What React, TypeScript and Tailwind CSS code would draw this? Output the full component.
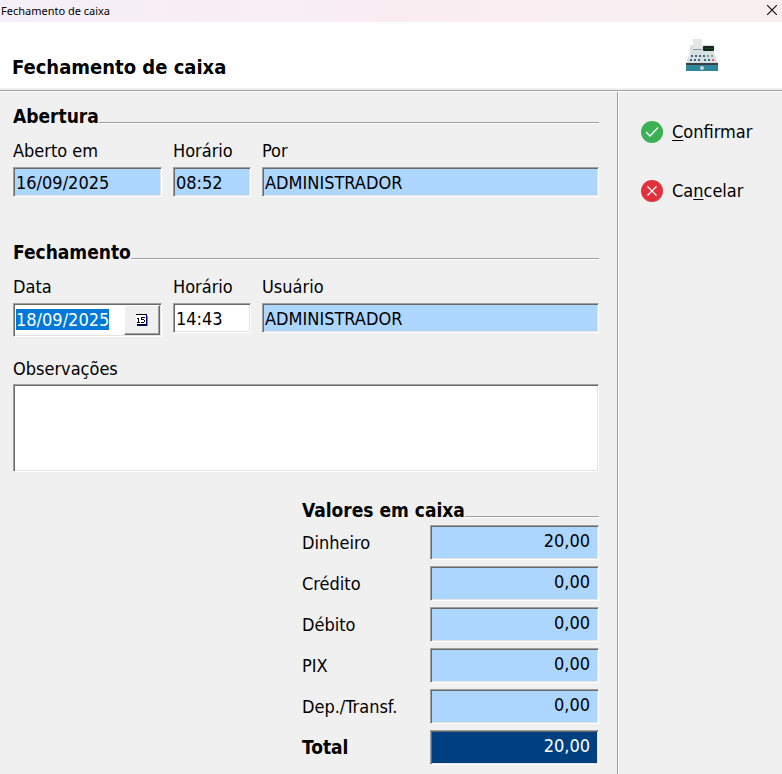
import { useEffect, useRef } from "react";
import type { ReactNode } from "react";

const bevel =
  "rounded-none border border-t-[#a0a0a0] border-l-[#a0a0a0] border-r-white border-b-white shadow-[inset_1px_1px_0_#696969,inset_-1px_-1px_0_#e3e3e3] outline-none";

const valores = [
  { id: "dinheiro", label: "Dinheiro", valor: "20,00" },
  { id: "credito", label: "Crédito", valor: "0,00" },
  { id: "debito", label: "Débito", valor: "0,00" },
  { id: "pix", label: "PIX", valor: "0,00" },
  { id: "transf", label: "Dep./Transf.", valor: "0,00" },
];

function CaixaIcon() {
  return (
    <svg width="32" height="32" viewBox="0 0 32 32" aria-hidden="true">
      <path d="M4 6h24v9H4z" fill="#d3e2e1" />
      <path d="M4 14h24l4 10H0z" fill="#d9dfe0" />
      <rect x="7" y="0" width="9" height="10" fill="#e6e6e6" />
      <rect x="7" y="10" width="9" height="1" fill="#8f9999" />
      <rect x="17" y="7" width="11" height="5" rx="1" fill="#14241a" />
      <path d="M19 9.5h8" stroke="#0b6416" strokeDasharray="2 1" />
      <path
        d="M5 16h2v2H5zM9 16h2v2H9zM13 16h2v2h-2zM17 16h2v2h-2zM4 20h2v2H4zM8 20h2v2H8zM12 20h2v2h-2zM18 20h2v2h-2z"
        fill="#356b80"
      />
      <path d="M21 16h2v2h-2zM25 16h2v2h-2z" fill="#969a8c" />
      <path d="M22 20h2v2h-2z" fill="#356b80" />
      <rect x="26" y="20" width="2" height="2" fill="#e8626b" />
      <rect y="24" width="32" height="2" fill="#3b3f44" />
      <rect y="26" width="32" height="6" fill="#2f8799" />
      <circle cx="16" cy="29" r="2" fill="#c5d5d8" />
    </svg>
  );
}

function Titulo({ children }: { children: ReactNode }) {
  return (
    <div className="flex items-end">
      <h2 className="text-[19px] leading-5 font-bold">{children}</h2>
      <div className="mb-0.5 h-0.5 flex-1 border-t border-b border-t-[#a0a0a0] border-b-white"></div>
    </div>
  );
}

function Campo({ id, label, valor, readOnly = true }: { id: string; label: string; valor: string; readOnly?: boolean }) {
  return (
    <div className="flex flex-col">
      <label htmlFor={id} className="mb-1 leading-6">
        {label}
      </label>
      <input
        id={id}
        defaultValue={valor}
        readOnly={readOnly}
        className={`h-[30px] w-full px-0.5 ${bevel} ${readOnly ? "bg-[#add6ff]" : "bg-white"}`}
      />
    </div>
  );
}

export default function App() {
  const dataRef = useRef<HTMLInputElement>(null);

  useEffect(() => {
    dataRef.current?.focus();
    dataRef.current?.select();
  }, []);

  return (
    <div className="flex min-h-screen flex-col bg-[#f0f0f0] font-['DejaVu_Sans_Condensed','DejaVu_Sans',sans-serif] text-lg text-black">
      <div className="flex h-[22px] items-center justify-between bg-gradient-to-r from-[#f5eff8] via-[#f9edf2] to-[#f9eff1] pl-px">
        <span className="font-['Noto_Sans',sans-serif] text-[11px] leading-5">Fechamento de caixa</span>
        <button type="button" aria-label="Fechar" className="px-[5px]">
          <svg width="10" height="10" viewBox="0 0 10 10" className="-mt-0.5" aria-hidden="true">
            <path d="M0 0l10 10M10 0L0 10" stroke="#111" strokeWidth="1.2" />
          </svg>
        </button>
      </div>

      <header className="flex h-[66px] items-end justify-between bg-white pr-16 pl-3">
        <h1 className="pb-[7px] text-xl leading-7 font-bold">Fechamento de caixa</h1>
        <div className="pb-[17px]">
          <CaixaIcon />
        </div>
      </header>
      <div className="mt-0.5 h-0.5 border-t border-b border-t-[#a0a0a0] border-b-white"></div>

      <div className="flex flex-1">
        <form className="flex-1 border-r border-[#a0a0a0] pt-3.5 pr-[18px] pb-2 pl-[13px]">
          <section>
            <Titulo>Abertura</Titulo>
            <div className="mt-[13px] grid grid-cols-[149px_78px_1fr] gap-x-[11px]">
              <Campo id="aberto" label="Aberto em" valor="16/09/2025" />
              <Campo id="hora-abertura" label="Horário" valor="08:52" />
              <Campo id="por" label="Por" valor="ADMINISTRADOR" />
            </div>
          </section>

          <section className="mt-[45px]">
            <Titulo>Fechamento</Titulo>
            <div className="mt-[13px] grid grid-cols-[149px_78px_1fr] gap-x-[11px]">
              <div className="flex flex-col">
                <label htmlFor="data" className="mb-1 leading-6">
                  Data
                </label>
                <div className={`flex h-[34px] bg-white p-px ${bevel}`}>
                  <input
                    id="data"
                    ref={dataRef}
                    defaultValue="18/09/2025"
                    className="h-7 min-w-0 flex-1 pl-px leading-6 outline-none selection:bg-[#0078d7] selection:text-white"
                  />
                  <button
                    type="button"
                    aria-label="Calendário"
                    className="flex w-9 items-center justify-center border border-t-white border-l-white border-r-[#696969] border-b-[#696969] bg-[#f0f0f0] shadow-[inset_-1px_-1px_0_#a0a0a0]"
                  >
                    <svg width="12" height="12" viewBox="0 0 12 12" shapeRendering="crispEdges" aria-hidden="true">
                      <rect x="0" y="1" width="10" height="9" fill="#fff" />
                      <path d="M0 .5h11M1 10.5h10" stroke="#000" />
                      <path d="M10.500 1v10M1 11.500h11" stroke="#000080" />
                      <path d="M11.500 2v10" stroke="#8080a0" />
                      <path d="M1 4.500h2M2.500 4v4M1 8.500h3M5 3.500h4M5.500 3v3M5 5.500h3M8.500 6v2M5 8.500h3" fill="none" stroke="#000" />
                    </svg>
                  </button>
                </div>
              </div>
              <Campo id="hora-fechamento" label="Horário" valor="14:43" readOnly={false} />
              <Campo id="usuario" label="Usuário" valor="ADMINISTRADOR" />
            </div>
          </section>

          <div className="mt-5 flex flex-col">
            <label htmlFor="obs" className="mb-[3px] leading-6">
              Observações
            </label>
            <textarea id="obs" className={`h-22 resize-none bg-white p-1 ${bevel}`}></textarea>
          </div>

          <section className="mt-7 ml-auto w-[297px]">
            <Titulo>Valores em caixa</Titulo>
            <div className="mt-[5px] flex flex-col gap-1.5">
              {valores.map((v) => (
                <div key={v.id} className="flex items-center">
                  <label htmlFor={v.id} className="w-32">
                    {v.label}
                  </label>
                  <input
                    id={v.id}
                    readOnly
                    defaultValue={v.valor}
                    className={`h-[35px] min-w-0 flex-1 bg-[#add6ff] pr-2 pb-1 text-right ${bevel}`}
                  />
                </div>
              ))}
              <div className="flex items-center">
                <label htmlFor="total" className="w-32 text-[19px] font-bold">
                  Total
                </label>
                <input
                  id="total"
                  readOnly
                  defaultValue="20,00"
                  className={`h-[35px] min-w-0 flex-1 bg-[#004080] pr-2 pb-1 text-right text-white ${bevel}`}
                />
              </div>
            </div>
          </section>
        </form>

        <aside className="flex w-[164px] flex-col items-start gap-[31px] border-l border-white pt-[26px] pl-[22px]">
          <button type="button" className="flex items-center gap-[9px] leading-7">
            <svg width="22" height="22" viewBox="0 0 22 22" fill="none" aria-hidden="true">
              <circle cx="11" cy="11" r="11" fill="#3bb054" />
              <path d="M5 11l4 4 8-8.500" stroke="#fff" strokeWidth="1.300" />
            </svg>
            <span>
              <u className="underline-offset-2">C</u>onfirmar
            </span>
          </button>
          <button type="button" className="flex items-center gap-[9px] leading-7">
            <svg width="22" height="22" viewBox="0 0 22 22" fill="none" aria-hidden="true">
              <circle cx="11" cy="11" r="11" fill="#e0323c" />
              <path d="M6.500 6.500l9 9M15.500 6.500l-9 9" stroke="#fff" strokeWidth="1.300" />
            </svg>
            <span>
              Ca<u className="underline-offset-2">n</u>celar
            </span>
          </button>
        </aside>
      </div>
    </div>
  );
}
